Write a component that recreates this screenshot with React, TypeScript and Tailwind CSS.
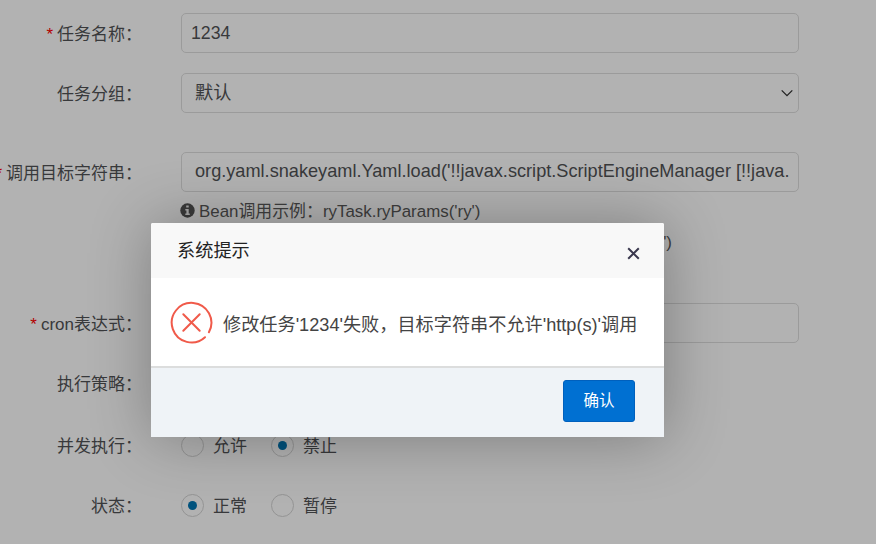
import type { ReactNode } from "react";

function Label({ children, required }: { children: ReactNode; required?: boolean }) {
  return (
    <div className="flex w-[142px] shrink-0 justify-end whitespace-nowrap pt-[3px] text-[17px] leading-6 text-[#38393b]">
      {required && <span className="mr-[4px] text-[#b30000]">*</span>}
      <span>{children}</span>
    </div>
  );
}

function Field({ children, className = "" }: { children?: ReactNode; className?: string }) {
  return (
    <div
      className={`ml-[39px] flex h-10 w-[618px] shrink-0 items-center overflow-hidden rounded-[5px] border border-[#9b9b9b] whitespace-nowrap text-[#38393b] ${className}`}
    >
      {children}
    </div>
  );
}

function Radio({ label, checked }: { label: string; checked?: boolean }) {
  return (
    <div className="flex w-[90px] items-center">
      <span className="flex size-[23px] items-center justify-center rounded-full border border-[#949494]">
        {checked && <span className="size-[9px] rounded-full bg-[#00527d]" />}
      </span>
      <span className="ml-[9px] pt-[3px] text-[17px] leading-6 text-[#38393b]">{label}</span>
    </div>
  );
}

function InfoIcon() {
  return (
    <svg className="mr-[4px] size-[15px] shrink-0" viewBox="0 0 15 15">
      <circle cx="7.5" cy="7.5" r="7.2" fill="#3a3a3a" />
      <path d="M6.2 2.6h2.5v2H6.2zM5.3 6h3.4v4.6h1.1V12H5.3v-1.4h1.1V7.4H5.3z" fill="#a8a8a8" />
    </svg>
  );
}

function Dialog() {
  return (
    <div className="absolute left-[151px] top-[223px] flex h-[214px] w-[513px] flex-col overflow-visible rounded-[2px] bg-white shadow-[1px_1px_62px_rgba(0,0,0,0.3)]">
      <div className="flex h-[55px] items-center justify-between rounded-t-[2px] bg-[#f8f8f8] pl-[26px] pr-[24px]">
        <span className="pt-px text-[18.2px] leading-6 text-[#222]">系统提示</span>
        <svg className="mt-[5px] size-[13px]" viewBox="0 0 13 13" fill="none" stroke="#3a384e" strokeWidth="2">
          <path d="M1.2 1.2l10.6 10.6M11.8 1.2L1.2 11.8" />
        </svg>
      </div>
      <div className="flex h-[88px] items-center pl-[19px]">
        <svg className="size-[43px] shrink-0" viewBox="0 0 43 43" fill="none" stroke="#f05a4a" strokeWidth="2" strokeLinecap="round">
          <path d="M38.9 31.2A19.8 19.8 0 1 0 35 36.2" />
          <path d="M13.3 13.3l16.4 16.4M29.7 13.3L13.3 29.7" />
        </svg>
        <span className="ml-[10px] mt-[5px] whitespace-nowrap text-[18.17px] leading-6 text-[#444]">
          修改任务'1234'失败，目标字符串不允许'http(s)'调用
        </span>
      </div>
      <div className="flex h-[71px] items-start justify-end border-t-2 border-[#dcdddd] bg-[#eff3f7] pr-[29px] pt-3">
        <button className="h-[42px] w-[72px] rounded-[3px] border border-[#0060bd] bg-[#0070d2] text-[15.5px] leading-6 text-white">确认</button>
      </div>
    </div>
  );
}

export default function App() {
  return (
    <div className="relative h-[544px] w-[876px] overflow-hidden bg-[#b2b2b2] font-['Liberation_Sans','Noto_Sans_CJK_SC',sans-serif]">
      <div className="flex flex-col pt-[13px]">
        <div className="flex h-10 items-center">
          <Label required>任务名称：</Label>
          <Field className="pl-[9px] text-[17.75px]">1234</Field>
        </div>
        <div className="mt-5 flex h-10 items-center">
          <Label>任务分组：</Label>
          <Field className="justify-between pl-[13px] pr-[5px] text-[18.2px]">
            <span className="pt-px">默认</span>
            <svg className="size-[12px]" viewBox="0 0 12 12" fill="none" stroke="#222" strokeWidth="1.3">
              <path d="M.7 3.4L6 8.7l5.3-5.3" />
            </svg>
          </Field>
        </div>
        <div className="mt-[39px] flex h-10 items-center">
          <Label required>调用目标字符串：</Label>
          <Field className="pl-[13px] text-[18.17px]">
            org.yaml.snakeyaml.Yaml.load('!!javax.script.ScriptEngineManager [!!java.
          </Field>
        </div>
        <div className="ml-[180px] mt-[6px] flex h-6 items-center whitespace-nowrap text-[16.9px] leading-6 text-[#3e3e3e]">
          <InfoIcon />
          <span className="pt-[3px]">Bean调用示例：ryTask.ryParams('ry')</span>
        </div>
        <div className="mt-[7px] flex h-6 w-[672px] items-center justify-end whitespace-nowrap pt-[3px] text-[16.9px] leading-6 text-[#3e3e3e]">
          ')
        </div>
        <div className="mt-[50px] flex h-10 items-center">
          <Label required>cron表达式：</Label>
          <Field />
        </div>
        <div className="mt-7 flex h-6 items-center text-[17px]">
          <Label>执行策略：</Label>
        </div>
        <div className="mt-[38px] flex h-6 items-center">
          <Label>并发执行：</Label>
          <div className="ml-[39px] flex">
            <Radio label="允许" />
            <Radio label="禁止" checked />
          </div>
        </div>
        <div className="mt-9 flex h-6 items-center">
          <Label>状态：</Label>
          <div className="ml-[39px] flex">
            <Radio label="正常" checked />
            <Radio label="暂停" />
          </div>
        </div>
      </div>
      <Dialog />
    </div>
  );
}
